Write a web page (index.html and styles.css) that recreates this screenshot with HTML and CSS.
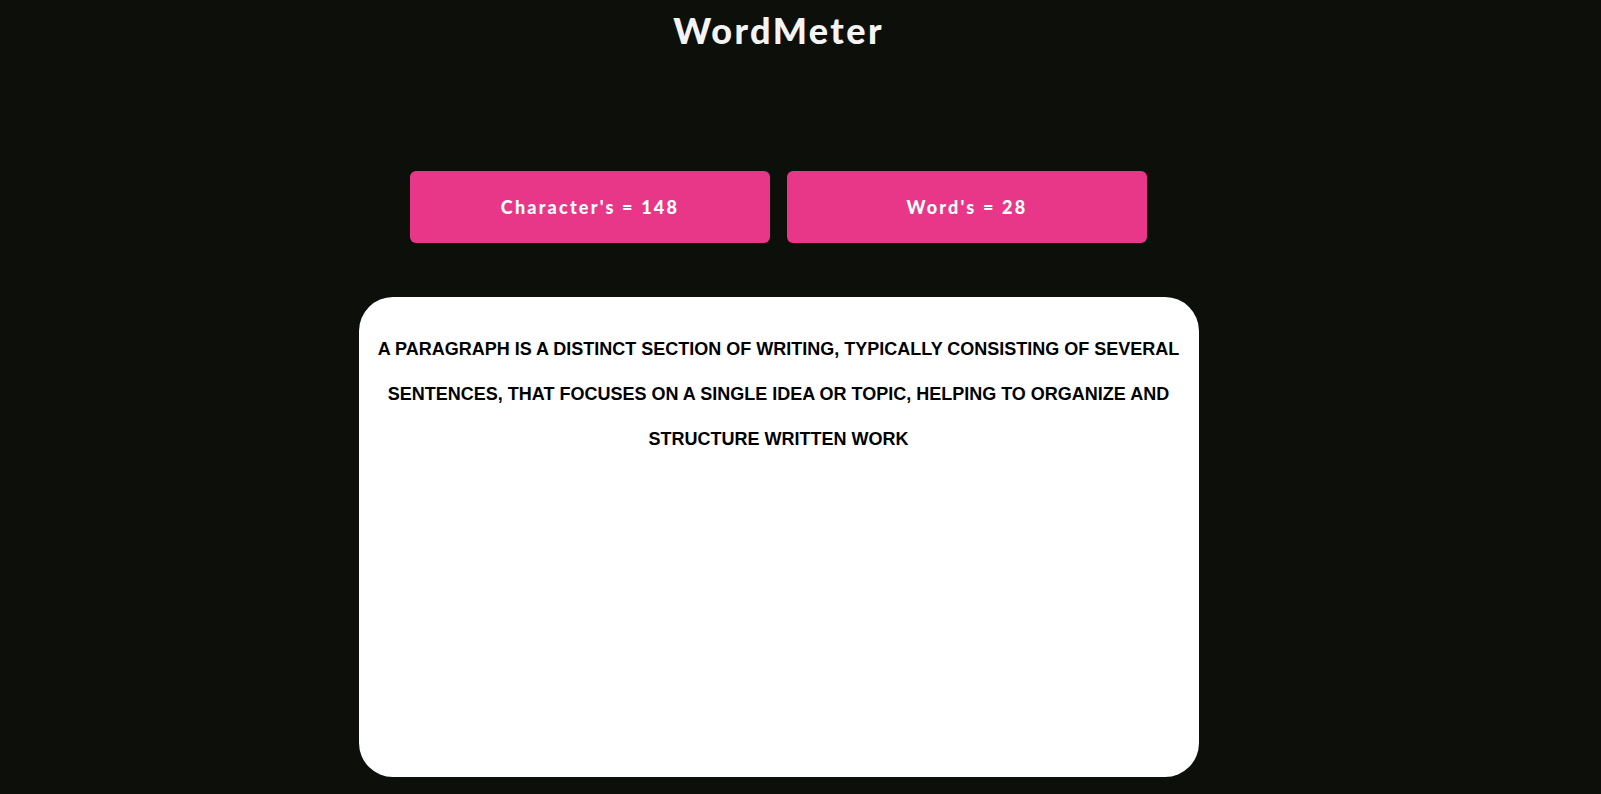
FILE: index.html
```html
<!DOCTYPE html>
<html lang="en">
<head>
<meta charset="utf-8">
<title>WordMeter</title>
<link rel="stylesheet" href="styles.css">
</head>
<body>
<div class="page">
  <header class="header">
    <h1 class="title">WordMeter</h1>
  </header>
  <main class="main">
    <div class="counters">
      <button class="counter">Character's = 148</button>
      <button class="counter">Word's = 28</button>
    </div>
    <textarea class="editor" spellcheck="false">A paragraph is a distinct section of writing, typically consisting of several sentences, that focuses on a single idea or topic, helping to organize and structure written work</textarea>
  </main>
</div>
</body>
</html>
```
FILE: styles.css
```css
* { box-sizing: border-box; }
html, body {
  margin: 0;
  padding: 0;
  background: #0d0f0b;
  height: 100%;
  overflow: hidden;
}
body {
  font-family: "Lato", "Open Sans", sans-serif;
  color: #f5f5f5;
}
.page {
  width: 1557px;
}
.header {
  display: flex;
  justify-content: center;
  padding-top: 7px;
}
.title {
  margin: 0;
  font-family: "Lato", sans-serif;
  font-weight: 900;
  font-size: 36px;
  line-height: 46px;
  letter-spacing: 2.4px;
  color: #f4f4f4;
}
.main {
  display: flex;
  flex-direction: column;
  align-items: center;
}
.counters {
  display: flex;
  gap: 17px;
  margin-top: 118px;
}
.counter {
  width: 360px;
  height: 72px;
  border: none;
  border-radius: 6px;
  background: #e83688;
  color: #ffffff;
  font-family: "Lato", sans-serif;
  font-weight: 900;
  font-size: 18px;
  letter-spacing: 2.2px;
  cursor: pointer;
}
.editor {
  margin-top: 54px;
  width: 840px;
  height: 480px;
  border: none;
  outline: none;
  resize: none;
  border-radius: 34px;
  background: #ffffff;
  color: #000000;
  padding: 30px 16px 28px;
  font-family: "Liberation Sans", Arial, sans-serif;
  font-weight: 700;
  font-size: 18px;
  line-height: 45px;
  text-transform: uppercase;
  text-align: center;
  overflow: hidden;
}
```
